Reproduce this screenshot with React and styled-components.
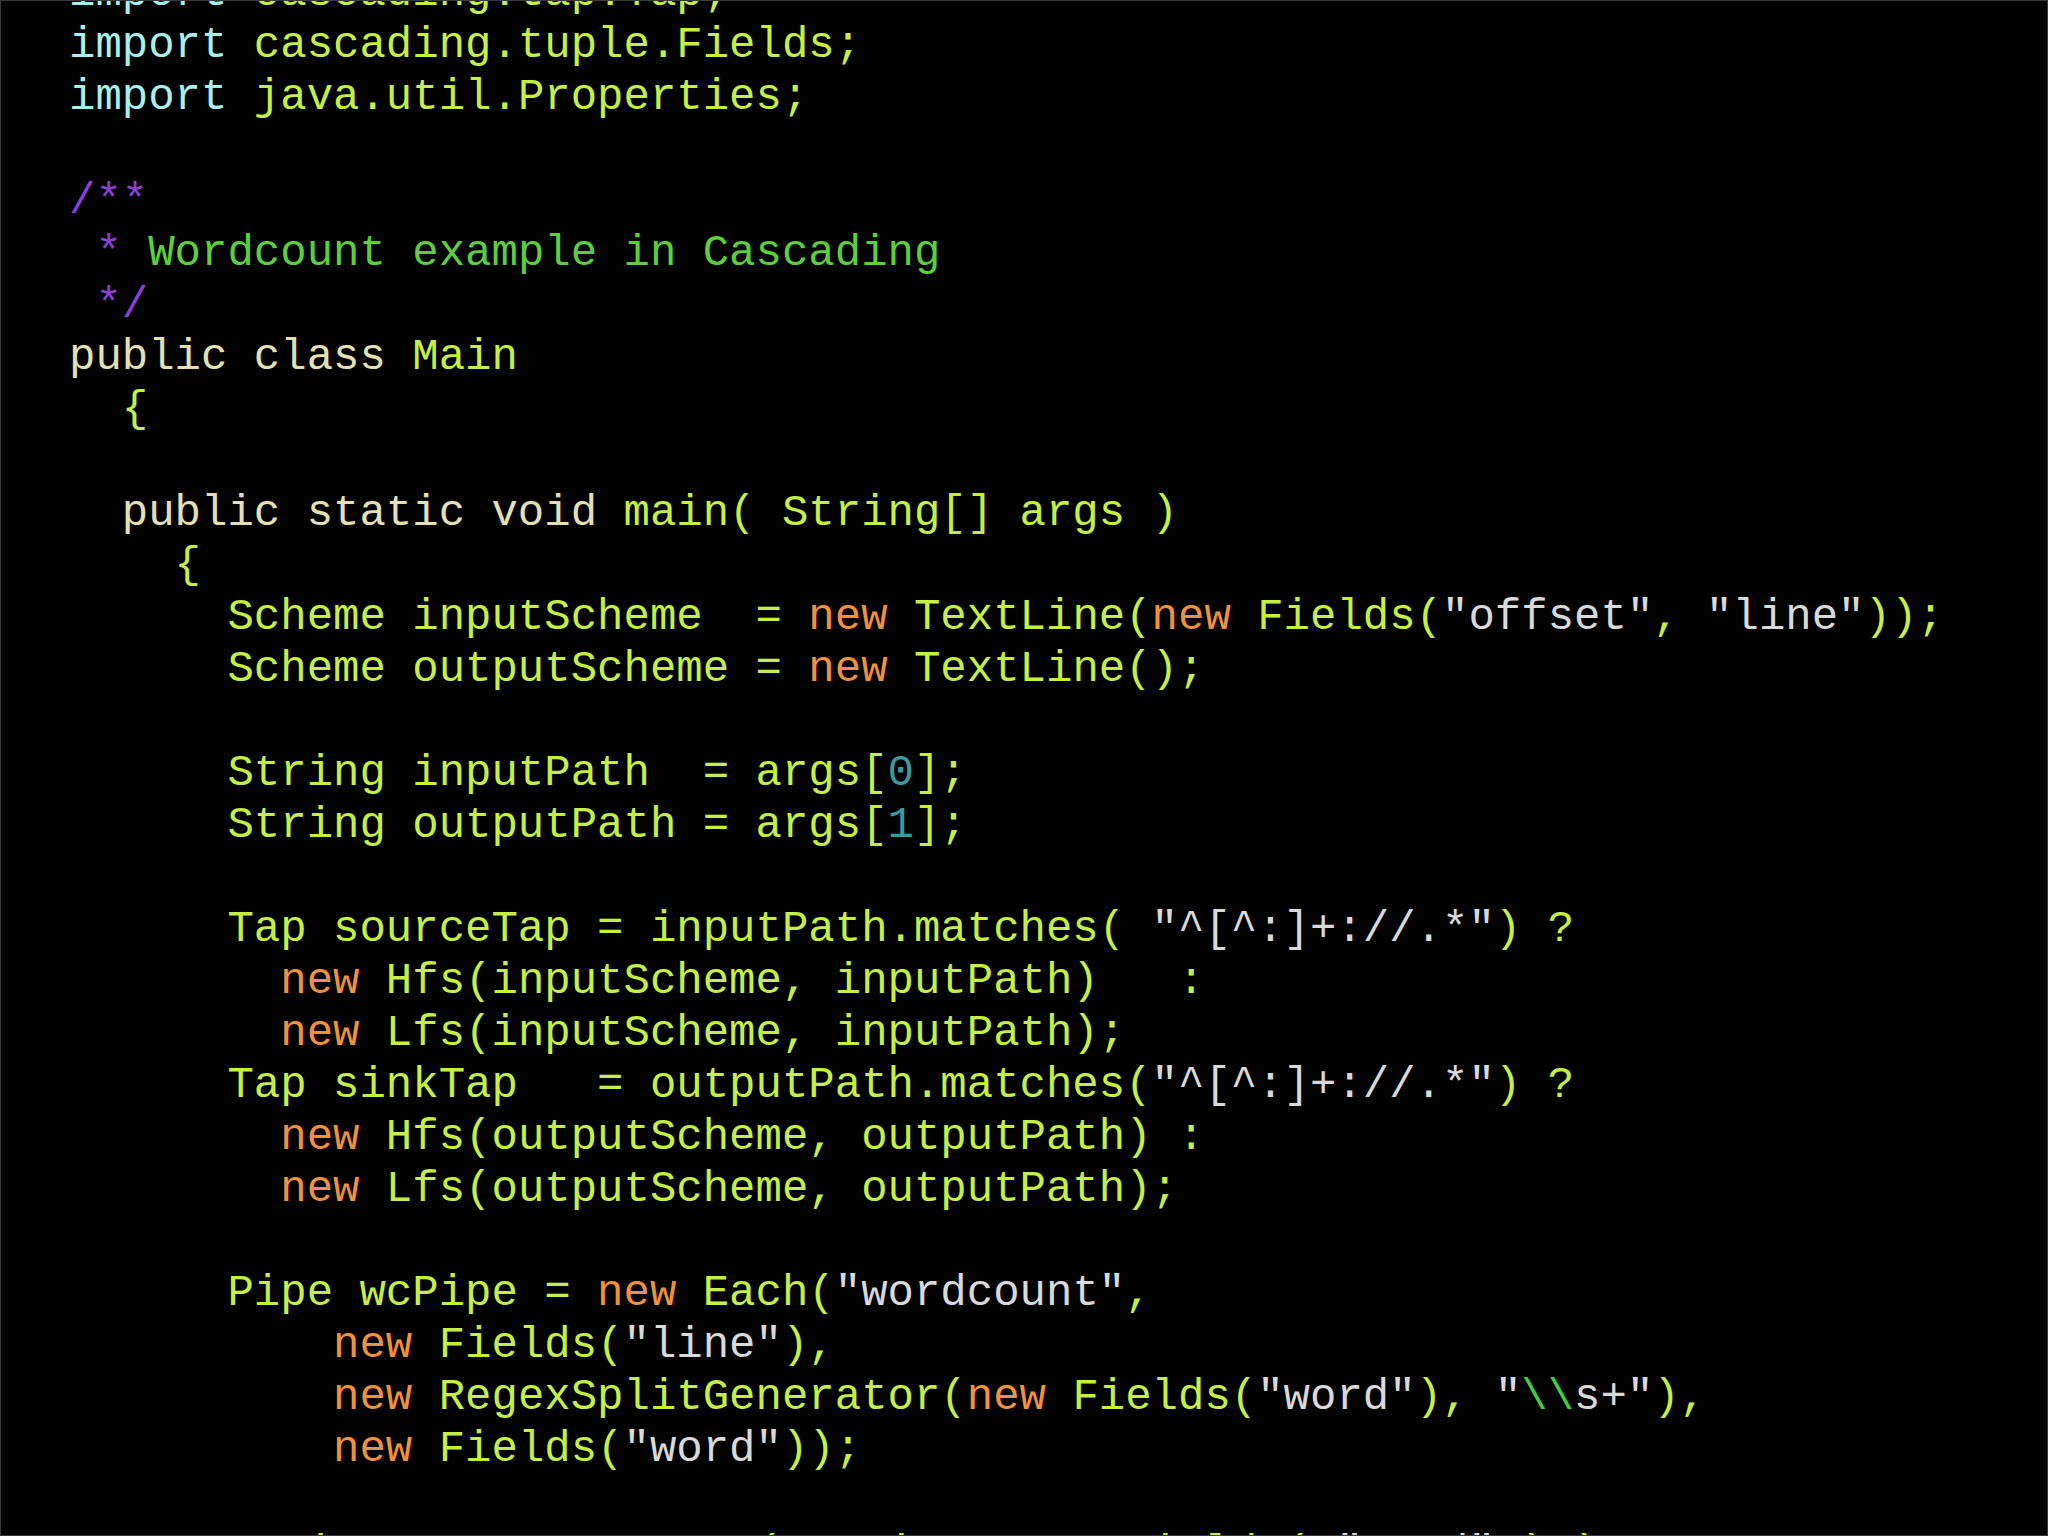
import styled, { createGlobalStyle } from "styled-components";

const GlobalStyle = createGlobalStyle`
  html, body {
    margin: 0;
    padding: 0;
    background: #020202;
  }
`;

const StyledFrame = styled.div`
  box-sizing: border-box;
  width: 100vw;
  height: 100vh;
  border: 1px solid #3a3a3a;
  background: #020202;
  overflow: hidden;
`;

const StyledCode = styled.pre`
  margin: -34px 0 0 0;
  padding: 0 0 0 68px;
  font-family: "Liberation Mono", "Courier New", monospace;
  font-size: 44px;
  line-height: 52px;
  white-space: pre;
`;

const StyledLine = styled.div`
  height: 52px;
`;

const colors = {
  kw: "#a8f0ec",
  id: "#c6ef43",
  decl: "#e4e0b4",
  mark: "#8b3fd6",
  cmt: "#5ccf3a",
  nw: "#f0913c",
  str: "#d9d9d9",
  num: "#3b9a9e",
  esc: "#3fd03f",
};

const StyledToken = styled.span`
  color: ${({ kind }) => colors[kind] || colors.id};
`;

// each line is a list of [kind, text]
const lines = [
  [["kw", "import"], ["id", " cascading.tap.Tap;"]],
  [["kw", "import"], ["id", " cascading.tuple.Fields;"]],
  [["kw", "import"], ["id", " java.util.Properties;"]],
  [],
  [["mark", "/**"]],
  [["mark", " * "], ["cmt", "Wordcount example in Cascading"]],
  [["mark", " */"]],
  [["decl", "public class "], ["id", "Main"]],
  [["id", "  {"]],
  [],
  [["decl", "  public static void "], ["id", "main( String[] args )"]],
  [["id", "    {"]],
  [
    ["id", "      Scheme inputScheme  = "],
    ["nw", "new"],
    ["id", " TextLine("],
    ["nw", "new"],
    ["id", " Fields("],
    ["str", "\"offset\""],
    ["id", ", "],
    ["str", "\"line\""],
    ["id", "));"],
  ],
  [["id", "      Scheme outputScheme = "], ["nw", "new"], ["id", " TextLine();"]],
  [],
  [["id", "      String inputPath  = args["], ["num", "0"], ["id", "];"]],
  [["id", "      String outputPath = args["], ["num", "1"], ["id", "];"]],
  [],
  [["id", "      Tap sourceTap = inputPath.matches( "], ["str", "\"^[^:]+://.*\""], ["id", ") ?"]],
  [["nw", "        new"], ["id", " Hfs(inputScheme, inputPath)   :"]],
  [["nw", "        new"], ["id", " Lfs(inputScheme, inputPath);"]],
  [["id", "      Tap sinkTap   = outputPath.matches("], ["str", "\"^[^:]+://.*\""], ["id", ") ?"]],
  [["nw", "        new"], ["id", " Hfs(outputScheme, outputPath) :"]],
  [["nw", "        new"], ["id", " Lfs(outputScheme, outputPath);"]],
  [],
  [["id", "      Pipe wcPipe = "], ["nw", "new"], ["id", " Each("], ["str", "\"wordcount\""], ["id", ","]],
  [["nw", "          new"], ["id", " Fields("], ["str", "\"line\""], ["id", "),"]],
  [
    ["nw", "          new"],
    ["id", " RegexSplitGenerator("],
    ["nw", "new"],
    ["id", " Fields("],
    ["str", "\"word\""],
    ["id", "), "],
    ["str", "\""],
    ["esc", "\\\\"],
    ["str", "s+\""],
    ["id", "),"],
  ],
  [["nw", "          new"], ["id", " Fields("], ["str", "\"word\""], ["id", "));"]],
  [],
  [["id", "      wcPipe = "], ["nw", "new"], ["id", " GroupBy( wcPipe, "], ["nw", "new"], ["id", " Fields( "], ["str", "\"word\""], ["id", " ) );"]],
];

function App() {
  return (
    <>
      <GlobalStyle />
      <StyledFrame>
        <StyledCode>
          {lines.map((line, i) => (
            <StyledLine key={i}>
              {line.map(([kind, text], j) => (
                <StyledToken key={j} kind={kind}>
                  {text}
                </StyledToken>
              ))}
            </StyledLine>
          ))}
        </StyledCode>
      </StyledFrame>
    </>
  );
}

export default App;
